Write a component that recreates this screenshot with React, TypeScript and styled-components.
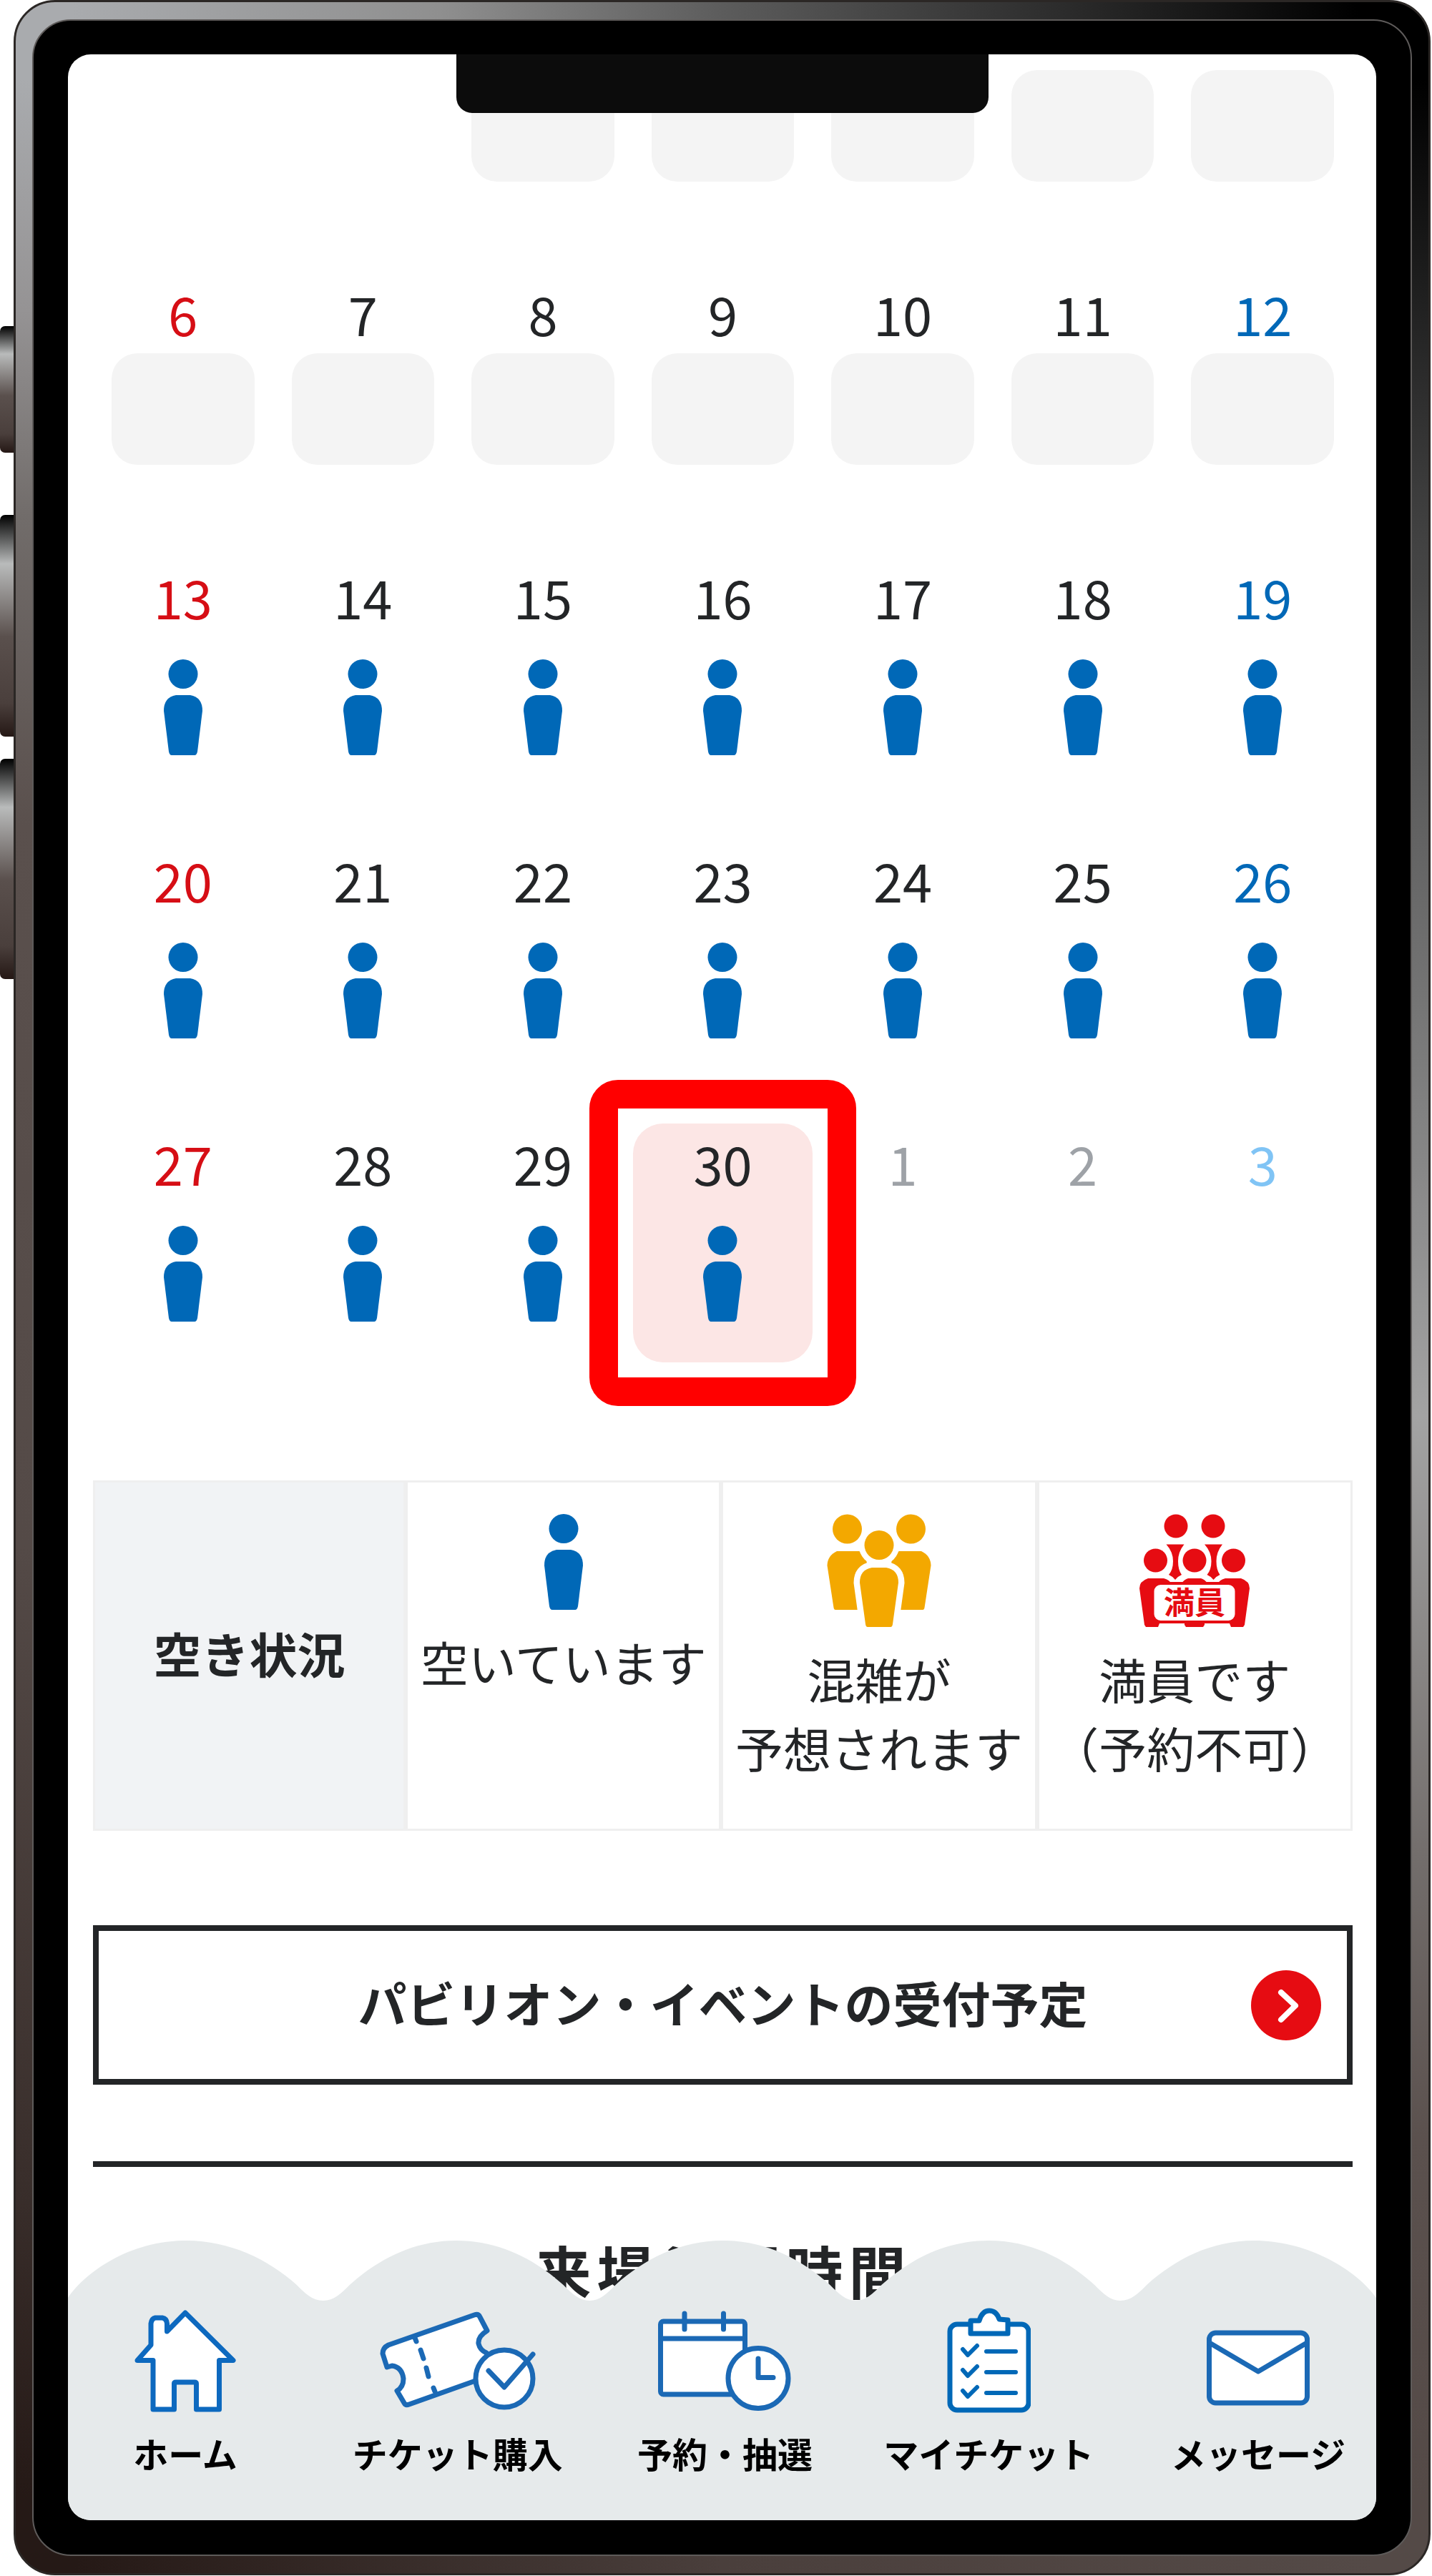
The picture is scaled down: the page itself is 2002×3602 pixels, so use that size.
import React from "react";
import styled, { createGlobalStyle } from "styled-components";

const ink = "#232527";
const blue = "#0068b7";
const lineBlue = "#1b69b5";
const red = "#e60c12";
const navGray = "#e6eaeb";

const GlobalStyle = createGlobalStyle`
  * { box-sizing: border-box; }
  body {
    margin: 0;
    background: #fff;
    color: ${ink};
    font-family: "Noto Sans CJK JP", "Noto Sans", sans-serif;
  }
  button { font: inherit; color: inherit; padding: 0; border: 0; background: none; }
`;

/* ---------- device ---------- */

const Device = styled.div`
  display: flex;
  align-items: stretch;
  padding: 0 2px 2px 0;
`;

const SideKeys = styled.div`
  flex: 0 0 19px;
  padding-top: 456px;
`;

const SideKey = styled.div<{ $length: number; $gap: number }>`
  height: ${(p) => p.$length}px;
  margin-bottom: ${(p) => p.$gap}px;
  border-radius: 7px 0 0 7px;
  background: linear-gradient(#000, #b9bbbb 22%, #5a504d 55%, #4a3f3c 85%, #251815);
`;

const Frame = styled.div`
  flex: 1;
  min-width: 0;
  padding: 24px 23px;
  border: 3px solid #2b2725;
  border-radius: 58px;
  background:
    linear-gradient(90deg, #a9abae 4%, #8f8f8f 30%, #5c5c5c 50%, #2a2a2a 75%, #000 95%) top / 100% 27px no-repeat,
    linear-gradient(90deg, #251916 4%, #4a3f3c 50%, #544a47 96%) bottom / 100% 27px no-repeat,
    linear-gradient(#a9abae 3%, #959394 12%, #716c6a 20%, #5a504d 32%, #544a47 60%, #392e2b 85%, #251916 97%) left / 50% 100% no-repeat,
    linear-gradient(#000 3%, #3c3c3c 19%, #a3a3a3 55%, #736e6c 72%, #5b514e 83%, #544a47 97%) right / 50% 100% no-repeat;
`;

const Bezel = styled.div`
  padding: 47px 48px 48px;
  border: 2px solid #5e5b5a;
  border-radius: 54px;
  background: #000;
`;

const Screen = styled.main`
  position: relative;
  overflow: hidden;
  padding: 22px 33px 291px 35px;
  border-radius: 32px;
  background: #fff;
`;

const Notch = styled.div`
  position: absolute;
  top: 0;
  left: 50%;
  width: 744px;
  height: 82px;
  margin-left: -372px;
  border-radius: 0 0 22px 22px;
  background: #0c0c0c;
`;

/* ---------- calendar ---------- */

const Week = styled.div`
  display: grid;
  grid-template-columns: repeat(7, minmax(0, 1fr));
  margin-bottom: 62px;
`;

const FirstWeek = styled(Week)`
  margin-bottom: 129px;
`;

const Slot = styled.div`
  height: 156px;
  margin: 0 26px;
`;

const ClosedSlot = styled(Slot)`
  border-radius: 36px;
  background: #f4f4f4;
`;

const tones = {
  weekday: ink,
  sunday: "#d60e15",
  saturday: blue,
  muted: "#9ea2a7",
  mutedSaturday: "#80c4f5",
};
type Tone = keyof typeof tones;

const Day = styled.button<{ $tone: Tone; $selected?: boolean }>`
  position: relative;
  display: block;
  height: 334px;
  border-radius: 42px;
  color: ${(p) => tones[p.$tone]};
  background: ${(p) => (p.$selected ? "#fce6e5" : "transparent")};
`;

const DayNumber = styled.span`
  display: block;
  height: 111px;
  font-size: 74px;
  line-height: 110px;
  text-align: center;
`;

const DaySlot = styled(Slot)`
  display: flex;
  justify-content: center;
  padding-top: 32px;
  margin-bottom: 67px;
`;

const ClosedDaySlot = styled(ClosedSlot)`
  display: block;
  margin-bottom: 67px;
`;

const Marker = styled.span`
  position: absolute;
  z-index: 1;
  inset: -61px;
  border: 40px solid #f00;
  border-radius: 40px;
`;

/* ---------- legend ---------- */

const Legend = styled.table`
  width: 100%;
  height: 490px;
  margin: 165px 0 132px;
  border: 0;
  border-spacing: 0;
  table-layout: fixed;
  font-size: 67px;
  line-height: 96px;
  text-align: center;
`;

const LegendHead = styled.th`
  width: 437px;
  padding: 0 0 8px;
  border: 3px solid #efefef;
  background: #f1f3f5;
  font-weight: 700;
`;

const LegendCell = styled.td`
  padding: 44px 0 0;
  border: 3px solid #efefef;
  vertical-align: top;
  white-space: nowrap;
  svg { display: block; margin: 0 auto 24px; }
`;

/* ---------- link button, heading ---------- */

const ScheduleButton = styled.button`
  display: grid;
  grid-template-columns: 98px 1fr 98px;
  align-items: center;
  width: 100%;
  height: 223px;
  padding: 0 36px;
  border: 8px solid ${ink};
  background: #fff;
  font-size: 68px;
  font-weight: 700;
  line-height: 96px;
`;

const ScheduleLabel = styled.span`
  grid-column: 2;
  padding-bottom: 8px;
`;

const Rule = styled.hr`
  height: 8px;
  margin: 107px 0 83px;
  border: 0;
  background: ${ink};
`;

const Heading = styled.h2`
  margin: 0;
  font-size: 80px;
  font-weight: 700;
  line-height: 120px;
  letter-spacing: 8px;
  text-align: center;
`;

/* ---------- bottom navigation ---------- */

const Nav = styled.nav`
  position: absolute;
  right: 0;
  bottom: 0;
  left: 0;
`;

const Wave = styled.svg`
  display: block;
  width: 100%;
  height: 85px;
`;

const NavItems = styled.div`
  display: grid;
  grid-template-columns: 328fr 434fr 314fr 424fr 330fr;
  padding: 8px 0 64px;
  background: ${navGray};
`;

const NavLink = styled.a`
  display: flex;
  flex-direction: column;
  align-items: center;
  gap: 24px;
  color: #000;
  font-size: 49px;
  font-weight: 700;
  line-height: 60px;
  text-decoration: none;
  white-space: nowrap;
`;

/* ---------- drawings ---------- */

const Person = () => (
  <svg width="54" height="134" viewBox="0 0 54 134" fill={blue} aria-hidden="true">
    <circle cx="27" cy="20.5" r="20.5" />
    <path d="M17 50H37Q54 53 54 72L47 129Q46 134 43 134H11Q8 134 7 129L0 72Q0 53 17 50Z" />
  </svg>
);

const Crowd = () => (
  <svg width="146" height="158" viewBox="0 0 146 158" fill="#f3a800" aria-hidden="true">
    <circle cx="28.5" cy="21" r="20.5" />
    <circle cx="117.5" cy="21" r="20.5" />
    <path d="M14 52H45Q56 56 56 72L46 134H12Q10 134 9.5 131L0.5 72Q1 58 14 52Z" />
    <path d="M132 52H101Q90 56 90 72L100 134H134Q136 134 136.5 131L145.5 72Q145 58 132 52Z" />
    <circle cx="73" cy="43.5" r="28.5" fill="#fff" />
    <path d="M63 75H83Q100 78 100 96L92 154Q91.5 158 89 158H57Q54.5 158 54 154L46 96Q46 78 63 75Z" stroke="#fff" strokeWidth="17" />
    <circle cx="73" cy="43.5" r="20.5" />
    <path d="M63 75H83Q100 78 100 96L92 154Q91.5 158 89 158H57Q54.5 158 54 154L46 96Q46 78 63 75Z" />
  </svg>
);

const neck = "M37.5 42.5H62.5Q54 53 54 66Q54 78 59 85Q54 87 50 92Q46 87 41 85Q47 78 47 66Q47 53 37.5 42.5Z";

const FullHouse = () => (
  <svg width="154" height="158" viewBox="0 0 154 158" fill={red} aria-hidden="true">
    <circle cx="51" cy="17" r="16.5" />
    <circle cx="103" cy="17" r="16.5" />
    <path d={neck} />
    <path d={neck} transform="translate(53.5 0)" />
    <circle cx="22.5" cy="65" r="16.5" />
    <circle cx="77" cy="65" r="16.5" />
    <circle cx="131.5" cy="65" r="16.5" />
    <path d="M12 90H34Q42 92 45 98V153H28L26 158H9L7 155L0 104Q0 94 12 90Z" />
    <path d="M142 90H120Q112 92 109 98V153H126L128 158H145L147 155L154 104Q154 94 142 90Z" />
    <path d="M68 90H86Q91 91 96 98H58Q63 91 68 90ZM63 150H91V155L89 158H65L63 155Z" />
    <rect x="18.5" y="97" width="117" height="54" rx="11" fill="#fff" stroke={red} strokeWidth="4" />
    <text x="77" y="140" fontSize="43" fontWeight="700" textAnchor="middle">満員</text>
  </svg>
);

const Chevron = () => (
  <svg width="98" height="98" viewBox="0 0 98 98" aria-hidden="true">
    <circle cx="49" cy="49" r="49" fill={red} />
    <path d="M42 31L62 49.5L42 69" fill="none" stroke="#fff" strokeWidth="8" strokeLinecap="round" strokeLinejoin="round" />
  </svg>
);

const LineIcon = styled.svg.attrs({ height: 150, "aria-hidden": true })`
  display: block;
  fill: #fff;
  stroke: ${lineBlue};
  stroke-width: 7px;
  stroke-linecap: round;
  stroke-linejoin: round;
`;

const HomeIcon = () => (
  <LineIcon width={142} viewBox="0 0 142 150">
    <path stroke="#0d69bf" d="M71 8L138 74.5H118.5V143H86.5V107Q86.5 105 84 105H58Q55.5 105 55.5 107V143H26V74.5H4L23 53V23Q24 16 29 15H39Q45 16 45.5 23V34Z" />
  </LineIcon>
);

const TicketIcon = () => (
  <LineIcon width={220} viewBox="0 0 220 150">
    <path d="M13 53L133 11Q139 9 141 14L151 33Q138 41 139 51Q141 60 150 64L160 94L42 136Q37 138 35 134L25 117Q34 112 34 100Q32 84 18 82L11 84L5 65Q5 57 13 53Z" />
    <path d="M50 43L52 48M58 60L62 72M66 85L69 97M76 113L78 118" />
    <circle cx="175" cy="100" r="40" />
    <path d="M153 89L175 112L215 66" fill="none" />
  </LineIcon>
);

const CalendarIcon = () => (
  <LineIcon width={188} viewBox="0 0 188 150">
    <rect x="4.5" y="20" width="118" height="102" rx="4" />
    <path d="M4.5 44H122M38 9V31M92.5 9V31" />
    <circle cx="141" cy="99.5" r="42" />
    <path d="M141 72V98.5H162" fill="none" />
  </LineIcon>
);

const ClipboardIcon = () => (
  <LineIcon width={118} viewBox="0 0 118 150">
    <g stroke={blue}>
      <rect x="5" y="24" width="110" height="120" rx="10" />
      <path d="M34 37V19H46Q50 5 60 5Q70 5 74 17L86 18V37Z" />
      {[0, 29, 58].map((dy) => (
        <path key={dy} fill="none" strokeWidth="6" d={`M23 ${59 + dy}L30 ${67 + dy}L43 ${54 + dy}M56 ${62 + dy}H97`} />
      ))}
    </g>
  </LineIcon>
);

const MailIcon = () => (
  <LineIcon width={148} viewBox="0 0 148 150">
    <rect x="5.5" y="36" width="137" height="98" rx="9" />
    <path d="M6 50L74 90L142 50" fill="none" />
  </LineIcon>
);

/* ---------- data ---------- */

const toneOf = (column: number): Tone =>
  column === 0 ? "sunday" : column === 6 ? "saturday" : "weekday";

const openWeeks = [
  [13, 14, 15, 16, 17, 18, 19],
  [20, 21, 22, 23, 24, 25, 26],
];

const navigation = [
  { label: "ホーム", Icon: HomeIcon },
  { label: "チケット購入", Icon: TicketIcon },
  { label: "予約・抽選", Icon: CalendarIcon },
  { label: "マイチケット", Icon: ClipboardIcon },
  { label: "メッセージ", Icon: MailIcon },
];

const OpenDay = ({ day, tone, selected }: { day: number; tone: Tone; selected?: boolean }) => (
  <Day type="button" $tone={tone} $selected={selected}>
    <DayNumber>{day}</DayNumber>
    <DaySlot as="span"><Person /></DaySlot>
    {selected && <Marker />}
  </Day>
);

export default function App() {
  return (
    <>
      <GlobalStyle />
      <Device>
        <SideKeys>
          <SideKey $length={177} $gap={87} />
          <SideKey $length={310} $gap={31} />
          <SideKey $length={308} $gap={0} />
        </SideKeys>
        <Frame>
          <Bezel>
            <Screen>
              <FirstWeek>
                <Slot />
                <Slot />
                {[1, 2, 3, 4, 5].map((d) => <ClosedSlot key={d} />)}
              </FirstWeek>
              <Week>
                {[6, 7, 8, 9, 10, 11, 12].map((day, i) => (
                  <Day key={day} type="button" $tone={toneOf(i)}>
                    <DayNumber>{day}</DayNumber>
                    <ClosedDaySlot as="span" />
                  </Day>
                ))}
              </Week>
              {openWeeks.map((week) => (
                <Week key={week[0]}>
                  {week.map((day, i) => <OpenDay key={day} day={day} tone={toneOf(i)} />)}
                </Week>
              ))}
              <Week>
                {[27, 28, 29, 30].map((day, i) => (
                  <OpenDay key={day} day={day} tone={toneOf(i)} selected={day === 30} />
                ))}
                {[1, 2, 3].map((day) => (
                  <Day key={day} type="button" $tone={day === 3 ? "mutedSaturday" : "muted"}>
                    <DayNumber>{day}</DayNumber>
                    <DaySlot as="span" />
                  </Day>
                ))}
              </Week>

              <Legend>
                <tbody>
                  <tr>
                    <LegendHead scope="row">空き状況</LegendHead>
                    <LegendCell><Person />空いています</LegendCell>
                    <LegendCell><Crowd />混雑が<br />予想されます</LegendCell>
                    <LegendCell><FullHouse />満員です<br />（予約不可）</LegendCell>
                  </tr>
                </tbody>
              </Legend>

              <ScheduleButton type="button">
                <ScheduleLabel>パビリオン・イベントの受付予定</ScheduleLabel>
                <Chevron />
              </ScheduleButton>

              <Rule />
              <Heading>来場希望時間</Heading>

              <Nav>
                <Wave viewBox="0 0 1830 85" preserveAspectRatio="none" fill={navGray} aria-hidden="true">
                  <path d="M0 85V80C20 50 80 0 166 0C226 0 280 26 320 62C332 74 342 84 357 84C372 84 382 74 394 62C434 26 484 0 543 0C603 0 653 26 693 62C705 74 715 84 730 84C744 84 754 74 766 62C806 26 856 0 916 0C976 0 1026 26 1066 62C1078 74 1088 84 1102 84C1116 84 1126 74 1138 62C1178 26 1228 0 1288 0C1348 0 1396 26 1436 62C1448 74 1458 84 1472 84C1487 84 1497 74 1509 62C1549 26 1599 0 1659 0C1745 0 1810 50 1830 80V85Z" />
                </Wave>
                <NavItems>
                  {navigation.map(({ label, Icon }) => (
                    <NavLink key={label} href="#">
                      <Icon />
                      {label}
                    </NavLink>
                  ))}
                </NavItems>
              </Nav>
              <Notch />
            </Screen>
          </Bezel>
        </Frame>
      </Device>
    </>
  );
}
